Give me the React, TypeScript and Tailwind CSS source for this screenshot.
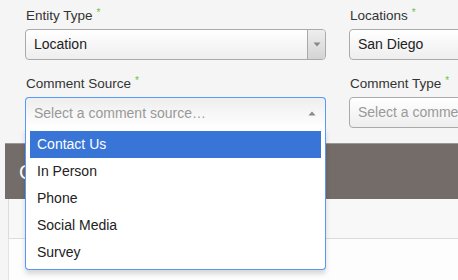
import React from 'react';

const font = { fontFamily: '"Liberation Sans", Arial, sans-serif' };

const Label = ({ text }: { text: string }) => (
  <div className="h-[23px] pl-px text-[13.5px] leading-[20px] text-[#333] whitespace-nowrap">
    {text}
    <span className="ml-[4px] relative -top-[4px] text-[10px] text-[#6cc04a]">*</span>
  </div>
);

const DownArrow = () => (
  <svg width="8" height="5" viewBox="0 0 8 5">
    <path d="M0.5 0.5 L7.5 0.5 L4 4.5 Z" fill="#888" />
  </svg>
);

const UpArrow = () => (
  <svg width="8" height="5" viewBox="0 0 8 5">
    <path d="M0.5 4.5 L7.5 4.5 L4 0.5 Z" fill="#888" />
  </svg>
);

const ClosedSelect = ({ value, placeholder, arrow }: { value: string; placeholder?: boolean; arrow?: boolean }) => (
  <div className="flex h-[31px] w-[301px] items-stretch overflow-hidden rounded-[4px] border border-[#aaa] bg-gradient-to-b from-white to-[#eeeeee]">
    <div className={`flex flex-1 items-center pl-[8px] text-[14px] whitespace-nowrap ${placeholder ? 'text-[#999]' : 'text-[#222]'}`}>
      {value}
    </div>
    {arrow && (
      <div className="flex w-[18px] items-center justify-center border-l border-[#aaa] bg-gradient-to-b from-[#eeeeee] to-[#d4d4d4]">
        <DownArrow />
      </div>
    )}
  </div>
);

const options = ['Contact Us', 'In Person', 'Phone', 'Social Media', 'Survey'];

const OpenSelect = () => (
  <div className="relative w-[301px]">
    <div className="flex h-[31px] items-center justify-between rounded-t-[4px] border border-b-0 border-[#5897fb] bg-gradient-to-b from-[#eeeeee] to-white pl-[8px] pr-[9px]">
      <span className="text-[14px] text-[#999] whitespace-nowrap">Select a comment source…</span>
      <UpArrow />
    </div>
    <div className="absolute left-0 top-full z-10 w-[301px] rounded-b-[4px] border border-t-0 border-[#5897fb] bg-white px-[4px] pt-[3px] pb-[3px] shadow-[0_4px_5px_rgba(0,0,0,0.15)]">
      {options.map((o, i) => (
        <div
          key={o}
          className={`flex h-[27px] items-center pl-[7px] text-[14px] ${i === 0 ? 'bg-[#3875d7] text-white' : 'text-[#222]'}`}
        >
          {o}
        </div>
      ))}
    </div>
  </div>
);

export default function App() {
  return (
    <div className="relative h-[280px] w-[458px] overflow-hidden bg-[#f5f5f5]" style={font}>
      {/* Form */}
      <div className="px-[25px] pt-[6px]">
        <div className="flex gap-[23px]">
          <div className="shrink-0">
            <Label text="Entity Type" />
            <ClosedSelect value="Location" arrow />
          </div>
          <div className="shrink-0">
            <Label text="Locations" />
            <ClosedSelect value="San Diego" />
          </div>
        </div>
        <div className="mt-[14px] flex gap-[23px]">
          <div className="shrink-0">
            <Label text="Comment Source" />
            <OpenSelect />
          </div>
          <div className="shrink-0">
            <Label text="Comment Type" />
            <ClosedSelect value="Select a comment type…" placeholder />
          </div>
        </div>
      </div>

      {/* Panel behind the dropdown */}
      <div className="ml-[5px] mt-[15px]">
        <div className="flex h-[56px] items-center border-t border-[#9c9694] bg-[#736c69] pl-[14px] text-[20px] text-white">
          Comments
        </div>
        <div className="ml-[3px] h-[40px] border-b border-l border-[#dcdcdc] bg-[#f8f8f8]" />
        <div className="ml-[3px] h-[50px] border-l border-[#e4e4e4] bg-[#fdfdfd]" />
      </div>
    </div>
  );
}
